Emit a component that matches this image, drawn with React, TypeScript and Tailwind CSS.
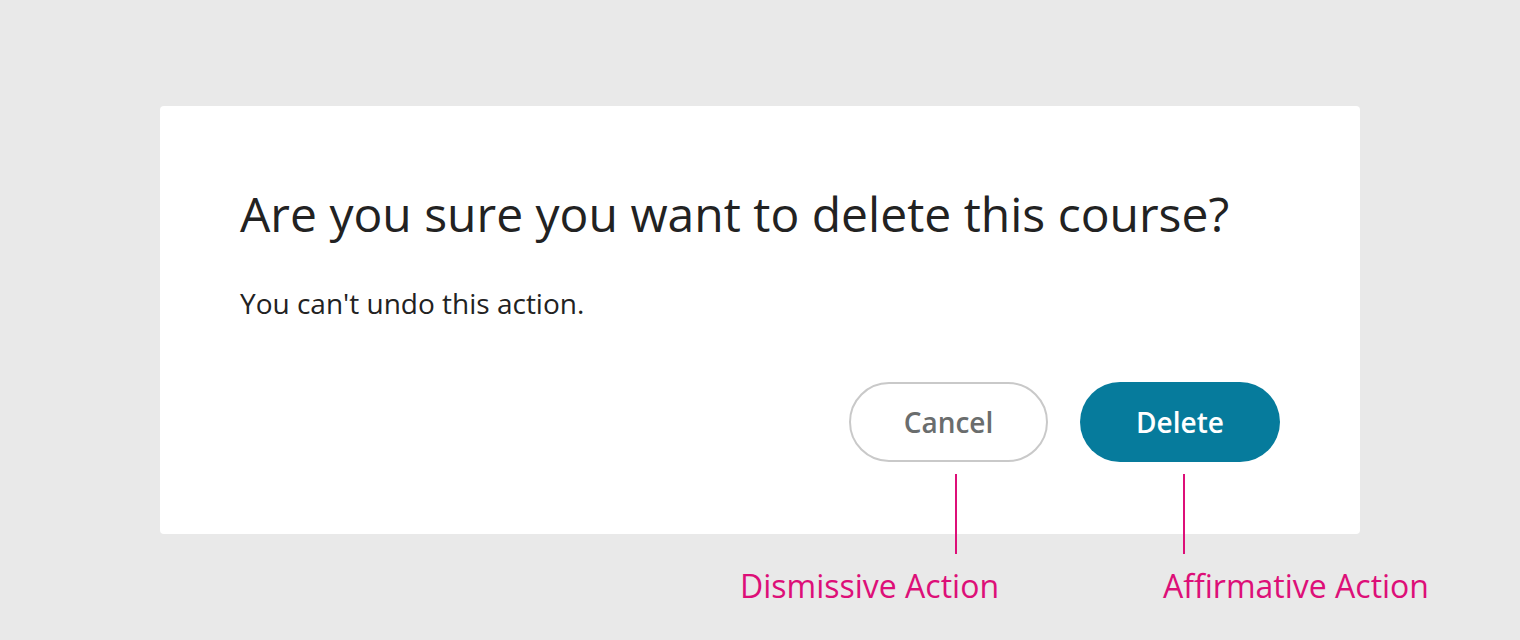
import React from 'react';

const font = { fontFamily: '"Open Sans", "Noto Sans", sans-serif' };

const Annotated: React.FC<{ label: string; labelClass: string; lineClass: string; children: React.ReactNode }> = ({
  label,
  labelClass,
  lineClass,
  children,
}) => (
  <div className="relative">
    {children}
    {/* callout line + label */}
    <div className={`absolute top-[calc(100%+12px)] h-[80px] w-[2px] bg-[#dd0f78] ${lineClass}`} />
    <div className={`absolute top-[calc(100%+104px)] whitespace-nowrap text-[32px] leading-[40px] text-[#dd0f78] ${labelClass}`}>
      {label}
    </div>
  </div>
);

export default function App() {
  return (
    <div className="min-h-[640px] w-full bg-[#e9e9e9] pt-[106px] pl-[160px]" style={font}>
      <div className="w-[1200px] h-[428px] rounded-[4px] bg-white pl-[80px] pr-[80px] pt-[76px] flex flex-col">
        <h1 className="text-[48px] leading-[64px] text-[#222222] font-normal">
          Are you sure you want to delete this course?
        </h1>
        <p className="mt-[39px] text-[28px] leading-[36px] text-[#222222]">You can't undo this action.</p>
        <div className="mt-[61px] flex justify-end gap-[32px]">
          <Annotated label="Dismissive Action" labelClass="right-[49px]" lineClass="left-[106px]">
            <button className="h-[80px] w-[199px] rounded-full border-2 border-[#c9c9c9] bg-white text-[28px] font-semibold text-[#6a6d6d]">
              Cancel
            </button>
          </Annotated>
          <Annotated label="Affirmative Action" labelClass="left-[83px]" lineClass="left-[103px]">
            <button className="h-[80px] w-[200px] rounded-full bg-[#067b9c] text-[28px] font-semibold text-white">
              Delete
            </button>
          </Annotated>
        </div>
      </div>
    </div>
  );
}
